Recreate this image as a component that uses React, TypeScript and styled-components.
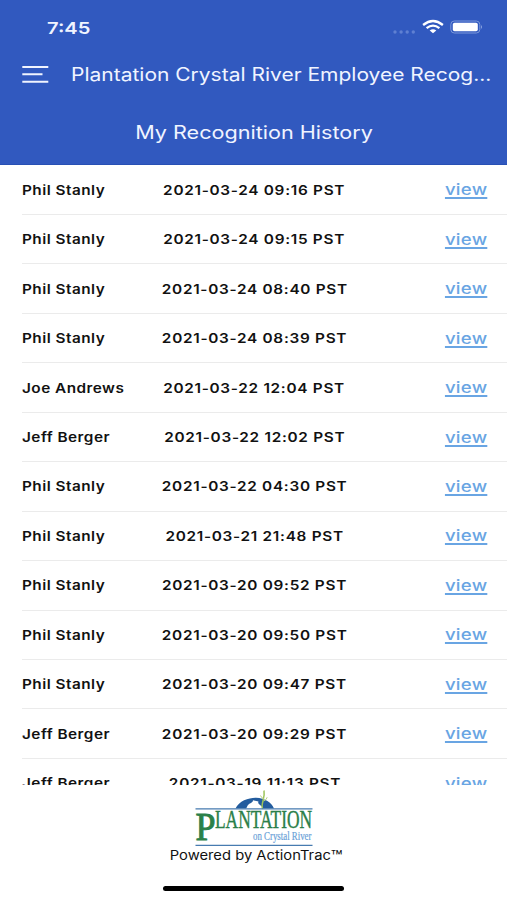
import React from "react";
import styled, { createGlobalStyle } from "styled-components";

const GlobalStyle = createGlobalStyle`
  * { box-sizing: border-box; }
  body {
    margin: 0;
    background: #fff;
    font-family: Inter, "Liberation Sans", sans-serif;
    -webkit-font-smoothing: antialiased;
  }
`;

const Screen = styled.div`
  width: 507px;
  height: 900px;
  display: flex;
  flex-direction: column;
  overflow: hidden;
  background: #fff;
`;

/* Wide lettering used throughout the app */
const Wide = styled.span<{ $scale: number; $origin?: string; $track?: number }>`
  display: inline-block;
  white-space: nowrap;
  letter-spacing: ${(p) => p.$track ?? 0}px;
  transform: scaleX(${(p) => p.$scale});
  transform-origin: ${(p) => p.$origin ?? "left"} center;
`;

const Header = styled.header`
  flex: none;
  height: 165px;
  background: #3159bf;
  color: #f0f4ff;
  border-bottom: 1px solid #2850b4;
`;

const StatusBar = styled.div`
  height: 50px;
  padding: 5px 24px 0 47px;
  display: flex;
  align-items: center;
  justify-content: space-between;
  font-size: 16.5px;
  font-weight: 600;
`;

const StatusIcons = styled.svg`
  display: block;
  width: 94px;
  height: 20px;
`;

const NavBar = styled.div`
  height: 49px;
  padding-left: 22px;
  display: flex;
  align-items: center;
  gap: 22px;
  font-size: 18px;
`;

const MenuButton = styled.button`
  width: 27px;
  height: 20px;
  padding: 0;
  border: 0;
  background: none;
  color: inherit;
  svg { display: block; }
`;

const SubTitle = styled.h1`
  margin: 0;
  height: 65px;
  padding: 2px 0 0 1px;
  display: flex;
  align-items: center;
  justify-content: center;
  font-size: 18px;
  font-weight: 400;
`;

const List = styled.ul`
  flex: none;
  height: 620px;
  margin: 0;
  padding: 0.6px 0 0 22px;
  list-style: none;
  overflow: hidden;
`;

const Row = styled.li`
  height: 49.45px;
  padding-right: 20px;
  display: grid;
  grid-template-columns: 1fr auto 1fr;
  align-items: center;
  border-bottom: 1px solid #ebebeb;
  font-size: 13px;
  font-weight: 600;
  color: #111;
`;

const ViewLink = styled.a`
  justify-self: end;
  display: block;
  font-size: 15.5px;
  font-weight: 500;
  letter-spacing: 0.2px;
  color: #69a5e3;
  transform: scaleX(1.2);
  transform-origin: right center;
  text-decoration: underline;
  text-decoration-thickness: 1.5px;
  text-underline-offset: 2px;
  text-decoration-skip-ink: none;
`;

const Footer = styled.footer`
  flex: 1;
  display: flex;
  flex-direction: column;
  align-items: center;
  padding-top: 5px;
  font-size: 13px;
  color: #111;
`;

const Logo = styled.svg`
  display: block;
  width: 120px;
  height: 57px;
`;

const Powered = styled.div`
  height: 17px;
  padding-left: 6px;
  line-height: 17px;
`;

const TradeMark = styled.span`
  font-size: 17px;
  line-height: 0;
  vertical-align: -3px;
`;

const HomeIndicator = styled.div`
  width: 181px;
  height: 5px;
  margin-top: 22px;
  border-radius: 3px;
  background: #000;
`;

const history: [string, string][] = [
  ["Phil Stanly", "2021-03-24 09:16 PST"],
  ["Phil Stanly", "2021-03-24 09:15 PST"],
  ["Phil Stanly", "2021-03-24 08:40 PST"],
  ["Phil Stanly", "2021-03-24 08:39 PST"],
  ["Joe Andrews", "2021-03-22 12:04 PST"],
  ["Jeff Berger", "2021-03-22 12:02 PST"],
  ["Phil Stanly", "2021-03-22 04:30 PST"],
  ["Phil Stanly", "2021-03-21 21:48 PST"],
  ["Phil Stanly", "2021-03-20 09:52 PST"],
  ["Phil Stanly", "2021-03-20 09:50 PST"],
  ["Phil Stanly", "2021-03-20 09:47 PST"],
  ["Jeff Berger", "2021-03-20 09:29 PST"],
  ["Jeff Berger", "2021-03-19 11:13 PST"],
];

export default function App() {
  return (
    <Screen>
      <GlobalStyle />
      <Header>
        <StatusBar>
          <Wide $scale={1.22}>7:45</Wide>
          <StatusIcons viewBox="0 0 94 20">
            <g fill="#5f80d2">
              <circle cx="6" cy="14" r="1.7" />
              <circle cx="12.1" cy="14" r="1.7" />
              <circle cx="18.2" cy="14" r="1.7" />
              <circle cx="24.3" cy="14" r="1.7" />
            </g>
            <g fill="none" stroke="#fff" strokeWidth="2.3">
              <path d="M34.1 7 Q44 -1 53.9 7" />
              <path d="M37.6 10.2 Q44 5 50.4 10.2" />
            </g>
            <path d="M40.7 12.4 Q44 10.2 47.3 12.4 L44 15.3 Z" fill="#fff" />
            <rect x="61.8" y="3" width="29" height="12" rx="3.5" fill="none" stroke="#7c98db" />
            <rect x="63.8" y="4.7" width="25" height="8.6" rx="1.8" fill="#fff" />
            <path d="M92 7 Q94 9 92 11 Z" fill="#8ba4e0" />
          </StatusIcons>
        </StatusBar>
        <NavBar>
          <MenuButton aria-label="Menu">
            <svg width="27" height="20" viewBox="0 0 27 20" stroke="currentColor" strokeWidth="2">
              <path d="M0.3 2H26.3M0.3 9.3H20.5M0.3 16.8H26.3" />
            </svg>
          </MenuButton>
          <Wide $scale={1.166}>Plantation Crystal River Employee Recog...</Wide>
        </NavBar>
        <SubTitle>
          <Wide $scale={1.2} $origin="center">My Recognition History</Wide>
        </SubTitle>
      </Header>
      <List>
        {history.map(([name, date]) => (
          <Row key={date}>
            <Wide $scale={1.18} $track={0.4}>{name}</Wide>
            <Wide $scale={1.18} $track={0.6} $origin="center">{date}</Wide>
            <ViewLink>view</ViewLink>
          </Row>
        ))}
      </List>
      <Footer>
        <Logo viewBox="0 0 120 57">
          <path d="M41.5 18.5 C45 11 55 7.6 62 7.8 C71 8 77.5 12.5 80 18.5 H69 C68 15 63 14.5 64.5 11.5 L59 10.2 C59 12.5 56 13 54.5 14.5 C53 16 53 17.5 52 18.5Z" fill="#235c9e" />
          <path d="M54.5 18.5 C54 15 58 14.5 60 12.5 C60 15 64 15.5 65 18.5Z" fill="#fff" />
          <path d="M68.7 19 C66.2 14 71.5 9 70 0.5" fill="none" stroke="#9dc45a" strokeWidth="1.5" />
          <path d="M69.8 9 Q67.5 8 66.5 5.5 M69.8 11 Q72.5 10 73.2 7.2" fill="none" stroke="#b6d183" strokeWidth="1" />
          <path d="M1.5 18.8H118.5M1.5 55.4H118.5" stroke="#477bb0" strokeWidth="1.3" />
          <g fill="#2b8049" stroke="#2b8049" fontFamily="Liberation Serif, serif">
            <text x="1.5" y="49.7" fontSize="41" strokeWidth="1" textLength="20" lengthAdjust="spacingAndGlyphs">P</text>
            <text x="21" y="38.4" fontSize="24.5" strokeWidth="0.4" textLength="97" lengthAdjust="spacingAndGlyphs">LANTATION</text>
          </g>
          <text x="59" y="50.2" fill="#6a9fd8" stroke="#6a9fd8" strokeWidth="0.2" fontFamily="Liberation Serif, serif" fontSize="11.5" textLength="58.5" lengthAdjust="spacingAndGlyphs">on Crystal River</text>
        </Logo>
        <Powered>
          <Wide $scale={1.135} $origin="center">Powered by ActionTrac<TradeMark>™</TradeMark></Wide>
        </Powered>
        <HomeIndicator />
      </Footer>
    </Screen>
  );
}
